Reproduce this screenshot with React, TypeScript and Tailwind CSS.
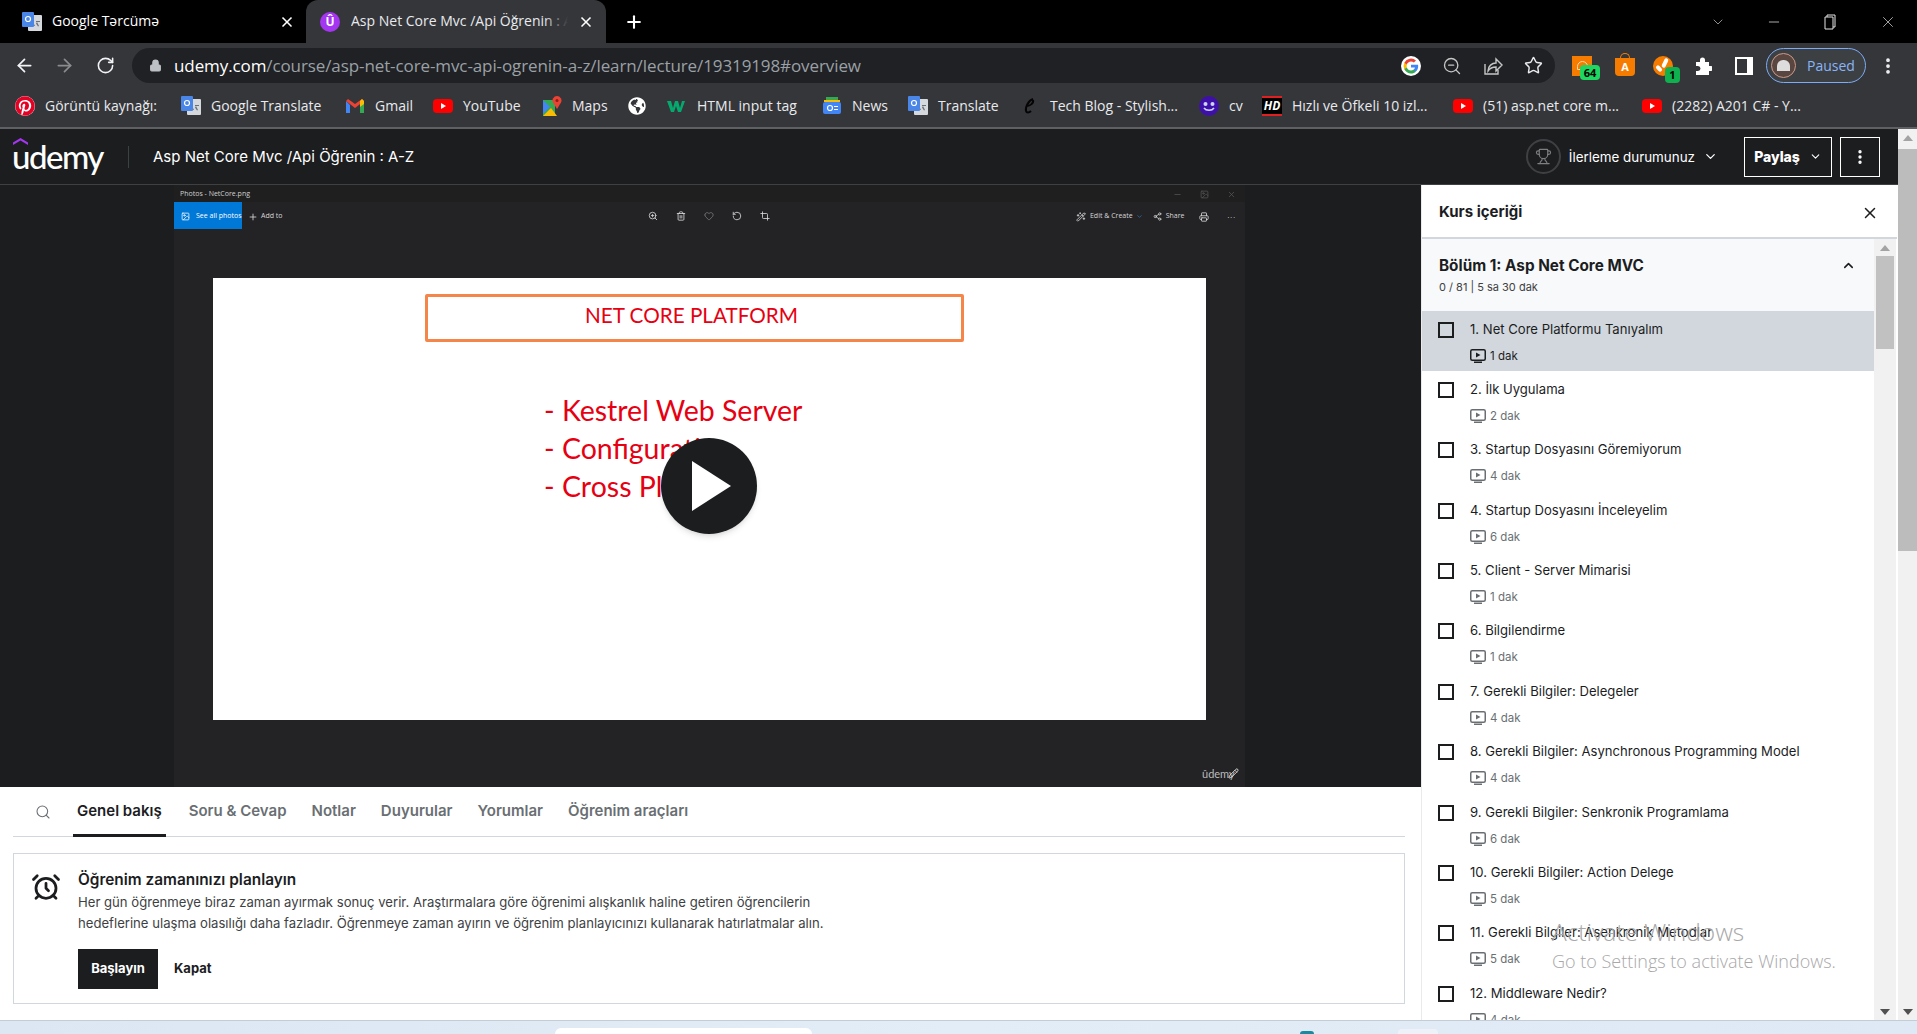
import React from 'react';
import { ArrowLeft, ArrowRight, RotateCw, Lock, ZoomOut, Star, Plus, X, Minus, ChevronDown, ChevronUp, Search, Trophy, AlarmClock, EllipsisVertical, ZoomIn, Trash2, Heart, RotateCcw, Crop, Printer, Image, Wand2, Share2, Pencil } from 'lucide-react';
import { FaPinterest, FaGlobeAmericas } from 'react-icons/fa';

const chrome = "font-['Open_Sans',sans-serif]";
const site = "font-['Inter',sans-serif]";

const TranslateIcon = () => (
  <svg width="20" height="20" viewBox="0 0 20 20" className="shrink-0">
    <rect x="6" y="3" width="14" height="16" rx="1" fill="#d5d8dc" />
    <path d="M11 10l2 4h-1l-1.500-3z M14 9h4v1h-4z M15 10l2 4-1 .5-2-3z" fill="#6b7078" />
    <rect x="0" y="0" width="12" height="15" rx="1" fill="#4a86e8" />
    <circle cx="6" cy="7" r="2.500" fill="none" stroke="#fff" strokeWidth="1.200" />
  </svg>
);

const GmailIcon = () => (
  <svg width="20" height="20" viewBox="0 0 20 20" className="shrink-0">
    <path d="M1 5v12h4V9z" fill="#4285f4" />
    <path d="M15 9v8h4V5z" fill="#34a853" />
    <path d="M1 5l9 7 9-7-2-2-7 5-7-5z" fill="#ea4335" />
    <path d="M15 5l2-2 2 2v3l-4 3z" fill="#fbbc04" />
  </svg>
);

const YoutubeIcon = () => (
  <svg width="20" height="20" viewBox="0 0 20 20" className="shrink-0">
    <rect x="0" y="3" width="20" height="14" rx="4" fill="#ff0000" />
    <path d="M8 7l5 3-5 3z" fill="#fff" />
  </svg>
);

const MapsIcon = () => (
  <svg width="20" height="20" viewBox="0 0 20 20" className="shrink-0">
    <path d="M1 4h12v16H1z" fill="#34a853" />
    <path d="M1 20l8-8 6 8z" fill="#fbbc04" />
    <path d="M1 4l7 7-7 7z" fill="#4285f4" />
    <path d="M15 0a4.500 4.500 0 0 1 4 6.500L15 13l-4-6.500A4.500 4.500 0 0 1 15 0z" fill="#ea4335" />
    <circle cx="15" cy="4.500" r="1.500" fill="#8c1d18" />
  </svg>
);

const GoogleG = ({ size = 20 }: { size?: number }) => (
  <svg width={size} height={size} viewBox="0 0 24 24">
    <circle cx="12" cy="12" r="12" fill="#fff" />
    <path d="M20.600 12.200c0-.6-.1-1.200-.2-1.800H12v3.400h4.800a4.100 4.100 0 0 1-1.800 2.700v2.200h2.900c1.700-1.500 2.700-3.800 2.700-6.500z" fill="#4285f4" />
    <path d="M12 21c2.400 0 4.400-.8 5.900-2.200L15 16.500c-.8.5-1.800.9-3 .9-2.300 0-4.300-1.600-5-3.700H4v2.300A9 9 0 0 0 12 21z" fill="#34a853" />
    <path d="M7 13.700a5.400 5.400 0 0 1 0-3.400V8H4a9 9 0 0 0 0 8z" fill="#fbbc04" />
    <path d="M12 6.600c1.300 0 2.500.5 3.400 1.300L18 5.400A9 9 0 0 0 4 8l3 2.300c.7-2.100 2.700-3.700 5-3.700z" fill="#ea4335" />
  </svg>
);

const bookmarks: { w: string; label?: string; icon: React.ReactNode }[] = [
  {
    w: 'w-[166px]', label: 'Görüntü kaynağı:',
    icon: (
      <div className="w-5 h-5 shrink-0 rounded-full bg-white">
        <FaPinterest size={20} color="#e60023" />
      </div>
    ),
  },
  { w: 'w-[164px]', label: 'Google Translate', icon: <TranslateIcon /> },
  { w: 'w-[88px]', label: 'Gmail', icon: <GmailIcon /> },
  { w: 'w-[109px]', label: 'YouTube', icon: <YoutubeIcon /> },
  { w: 'w-[86px]', label: 'Maps', icon: <MapsIcon /> },
  { w: 'w-[39px]', icon: <FaGlobeAmericas size={18} color="#fff" className="shrink-0" /> },
  {
    w: 'w-[155px]', label: 'HTML input tag',
    icon: (
      <svg width="20" height="20" viewBox="0 0 20 20" className="shrink-0">
        <path d="M0 5h4l2 7 2-7h3l2 7 2-7h3l-4 11h-3L9 10l-2 6H4z" fill="#04aa6d" />
      </svg>
    ),
  },
  {
    w: 'w-[86px]', label: 'News',
    icon: (
      <svg width="20" height="20" viewBox="0 0 20 20" className="shrink-0">
        <path d="M4 1h12v6H4z" fill="#34a853" />
        <path d="M2 4h16v2H2z" fill="#fbbc04" />
        <rect x="1" y="6" width="18" height="12" rx="2" fill="#4285f4" />
        <circle cx="8" cy="12" r="2.500" fill="none" stroke="#fff" strokeWidth="1.200" />
        <path d="M12 10h4v1h-4zM12 13h4v1h-4z" fill="#fff" />
      </svg>
    ),
  },
  { w: 'w-[112px]', label: 'Translate', icon: <TranslateIcon /> },
  {
    w: 'w-[179px]', label: 'Tech Blog - Stylish...',
    icon: (
      <svg width="20" height="20" viewBox="0 0 20 20" className="shrink-0">
        <path d="M13 3c-4 1-8 8-7 12 .5 2 3 2 5 0M7 10c3 0 7-3 6-6" fill="none" stroke="#050505" strokeWidth="2" />
      </svg>
    ),
  },
  {
    w: 'w-[63px]', label: 'cv',
    icon: (
      <svg width="20" height="20" viewBox="0 0 20 20" className="shrink-0">
        <circle cx="10" cy="10" r="10" fill="#3f10a8" />
        <circle cx="6.500" cy="8" r="2" fill="#cdd4ff" />
        <circle cx="13.500" cy="8" r="2" fill="#cdd4ff" />
        <path d="M5 12c2 3 8 3 10 0" fill="none" stroke="#cdd4ff" strokeWidth="1.500" />
      </svg>
    ),
  },
  {
    w: 'w-[191px]', label: 'Hızlı ve Öfkeli 10 izl...',
    icon: (
      <div className="w-5 h-5 shrink-0 bg-black border-y-2 border-y-[#e02020] text-white text-[12px] font-bold italic leading-4 text-center">HD</div>
    ),
  },
  { w: 'w-[189px]', label: '(51) asp.net core m...', icon: <YoutubeIcon /> },
  { w: 'w-[185px]', label: '(2282) A201 C# - Y...', icon: <YoutubeIcon /> },
];

const lectures = [
  ['1. Net Core Platformu Tanıyalım', '1 dak'],
  ['2. İlk Uygulama', '2 dak'],
  ['3. Startup Dosyasını Göremiyorum', '4 dak'],
  ['4. Startup Dosyasını İnceleyelim', '6 dak'],
  ['5. Client - Server Mimarisi', '1 dak'],
  ['6. Bilgilendirme', '1 dak'],
  ['7. Gerekli Bilgiler: Delegeler', '4 dak'],
  ['8. Gerekli Bilgiler: Asynchronous Programming Model', '4 dak'],
  ['9. Gerekli Bilgiler: Senkronik Programlama', '6 dak'],
  ['10. Gerekli Bilgiler: Action Delege', '5 dak'],
  ['11. Gerekli Bilgiler: Asenkronik Metodlar', '5 dak'],
  ['12. Middleware Nedir?', '4 dak'],
];

const VideoIcon = () => (
  <svg width="16" height="14" viewBox="0 0 16 14" className="shrink-0">
    <rect x="0.750" y="0.750" width="14.500" height="10.500" rx="1.500" fill="none" stroke="currentColor" strokeWidth="1.500" />
    <path d="M6 3.500l4.500 2.500L6 8.500z" fill="currentColor" />
    <path d="M4 12.500h8V14H4z" fill="currentColor" />
  </svg>
);

const ScrollArrow = ({ up }: { up?: boolean }) => (
  <div className="h-[17px] flex items-center justify-center">
    <svg width="10" height="6" viewBox="0 0 10 6">
      <path d={up ? 'M0 6l5-6 5 6z' : 'M0 0l5 6 5-6z'} fill={up ? '#a3a3a3' : '#505050'} />
    </svg>
  </div>
);

const tabs = ['Soru & Cevap', 'Notlar', 'Duyurular', 'Yorumlar', 'Öğrenim araçları'];

export default function App() {
  return (
    <div className={`relative w-[1917px] h-[1034px] overflow-hidden flex flex-col bg-white ${site}`}>
      {/* Browser tabs */}
      <div className={`h-[43px] shrink-0 bg-black flex text-white text-[14px] ${chrome}`}>
        <div className="w-[306px] flex items-center pl-[22px] pr-[11px]">
          <TranslateIcon />
          <span className="ml-[10px] flex-1 pb-[2px]">Google Tərcümə</span>
          <X size={16} strokeWidth={2.5} />
        </div>
        <div className="w-[300px] h-[43px] bg-[#35363a] rounded-t-xl flex items-center pl-[14px] pr-[12px]">
          <div className="w-5 h-5 shrink-0 rounded-full bg-[#a435f0] flex items-center justify-center text-[12px] font-bold leading-none">Û</div>
          <div className="relative ml-[11px] w-[217px] pb-[2px] overflow-hidden whitespace-nowrap text-[#e8eaed]">
            Asp Net Core Mvc /Api Öğrenin : A-Z
            <div className="absolute right-0 top-0 bottom-0 w-[24px] bg-gradient-to-r from-[#35363a]/0 to-[#35363a]" />
          </div>
          <X size={16} strokeWidth={2.5} className="ml-[10px]" />
        </div>
        <div className="ml-[18px] flex items-center"><Plus size={20} strokeWidth={2.5} /></div>
        <div className="ml-auto flex items-center text-[#d5d5d5]">
          <ChevronDown size={16} strokeWidth={1} />
          <Minus size={16} strokeWidth={1.2} className="ml-[40px]" />
          <svg width="14" height="16" viewBox="0 0 14 16" className="ml-[42px]">
            <path d="M3 3V1h8v12h-2M1 3h8v12H1z" fill="none" stroke="#e5e5e5" />
          </svg>
          <X size={18} strokeWidth={1} className="ml-[41px] mr-[20px]" />
        </div>
      </div>

      {/* Address bar */}
      <div className={`h-[42px] shrink-0 pt-[3px] bg-[#35363a] flex items-center ${chrome}`}>
        <ArrowLeft size={21} color="#f1f3f4" strokeWidth={2} className="ml-[14px]" />
        <ArrowRight size={21} color="#8a8b8d" strokeWidth={2} className="ml-[19px]" />
        <RotateCw size={19} color="#f1f3f4" strokeWidth={2} className="ml-[21px]" />
        <div className="ml-[17px] w-[1423px] h-[35px] rounded-full bg-[#202124] flex items-center pl-[17px] pr-[12px]">
          <Lock size={13} color="#bdc1c6" fill="#bdc1c6" />
          <span className="ml-[12px] text-[17px] tracking-[-0.1px] text-[#9aa0a6] whitespace-nowrap"><span className="text-white">udemy.com</span>/course/asp-net-core-mvc-api-ogrenin-a-z/learn/lecture/19319198#overview</span>
          <div className="ml-auto flex items-center gap-[21px]">
            <GoogleG />
            <ZoomOut size={20} color="#c4c7c5" strokeWidth={1.6} />
            <svg width="20" height="20" viewBox="0 0 20 20" fill="none" stroke="#c4c7c5" strokeWidth="1.400">
              <path d="M2 8v10h13v-4" />
              <path d="M5 15c0-5 4-8 8-8V3l6 6-6 6v-4c-4 0-6 1-8 4z" />
            </svg>
            <Star size={19} color="#e8eaed" strokeWidth={1.8} />
          </div>
        </div>
        <div className="relative ml-[17px] w-[20px] h-[20px] bg-[#f57c00] flex items-center justify-center">
          <div className="w-[11px] h-[9px] rounded-t-full border border-[#ffd9b0]" />
          <div className="absolute left-[8px] top-[9px] w-[20px] h-[15px] rounded-sm bg-[#1ed760] text-black text-[11px] font-bold leading-[15px] text-center">64</div>
        </div>
        <div className="ml-[23px] relative w-[20px] h-[18px] mt-[2px] bg-[#f57c00] rounded-b-sm text-white text-[11px] font-bold leading-[18px] text-center">
          A
          <div className="absolute left-[5px] -top-[5px] w-[10px] h-[6px] rounded-t-full border border-b-0 border-[#f57c00]" />
        </div>
        <div className="ml-[18px] relative w-[20px] h-[20px] rounded-full bg-[#f57c00]">
          <div className="absolute left-[10px] top-[2px] w-[4px] h-[10px] rotate-[25deg] bg-white rounded-sm" />
          <div className="absolute left-[4px] top-[9px] w-[4px] h-[7px] -rotate-[45deg] bg-white rounded-sm" />
          <div className="absolute left-[12px] top-[11px] w-[15px] h-[16px] rounded-sm bg-[#0fb14e] text-black text-[11px] font-bold leading-[16px] text-center">1</div>
        </div>
        <svg width="18" height="18" viewBox="0 0 18 18" className="ml-[21px]">
          <path d="M2 5h4V3a2.500 2.500 0 0 1 5 0v2h4v4h2a2.500 2.500 0 0 1 0 5h-2v4H2v-4h2a2.500 2.500 0 0 0 0-5H2z" fill="#fff" />
        </svg>
        <div className="ml-[23px] w-[18px] h-[18px] bg-white flex"><div className="w-[10px] h-[14px] m-[2px] bg-[#35363a]" /></div>
        <div className="ml-[13px] w-[100px] h-[35px] rounded-full border border-[#7cacf8] bg-[#3c4043] flex items-center pl-[4px]">
          <div className="w-[25px] h-[25px] rounded-full bg-[#5a4640] border border-[#c98] flex items-center justify-center">
            <div className="w-[13px] h-[11px] bg-[#ddd] rounded-t-md" />
          </div>
          <span className="ml-[11px] text-[14px] text-[#8ab4f8]">Paused</span>
        </div>
        <EllipsisVertical size={20} color="#f1f3f4" strokeWidth={2.5} className="ml-[12px]" />
      </div>

      {/* Bookmarks */}
      <div className={`h-[44px] shrink-0 pb-[1px] bg-[#35363a] border-b-2 border-b-[#5f6063] flex items-center pl-[15px] text-[14px] text-[#e8eaed] ${chrome}`}>
        {bookmarks.map((b, i) => (
          <div key={i} className={`${b.w} shrink-0 flex items-center gap-[10px] whitespace-nowrap`}>
            {b.icon}
            {b.label && <span>{b.label}</span>}
          </div>
        ))}
      </div>

      <div className="flex-1 flex min-h-0">
        <div className="w-[1898px] flex flex-col min-h-0">
          {/* Udemy header */}
          <div className="h-[56px] shrink-0 bg-[#1c1d1f] border-b border-b-[#3e4143] flex items-center text-white">
            <div className="relative w-[128px] pl-[12px]">
              <svg width="15" height="7" viewBox="0 0 15 7" className="absolute left-[13px] top-0">
                <path d="M7.500 0L15 4.500V7L7.500 2.500 0 7V4.500z" fill="#a435f0" />
              </svg>
              <span className="text-[33px] leading-[36px] font-medium tracking-[-1.5px] font-['Lato',sans-serif]">udemy</span>
            </div>
            <div className="w-px h-[22px] bg-[#3e4143]" />
            <span className="ml-[24px] pt-[1px] text-[15px]">Asp Net Core Mvc /Api Öğrenin : A-Z</span>
            <div className="ml-auto w-[35px] h-[35px] rounded-full border-2 border-[#3e4143] flex items-center justify-center">
              <Trophy size={17} color="#7d7f82" strokeWidth={1.6} />
            </div>
            <span className="ml-[8px] pt-[1px] text-[13.400px]">İlerleme durumunuz</span>
            <ChevronDown size={15} className="ml-[8px]" />
            <div className="ml-[26px] w-[88px] h-[40px] border border-white flex items-center justify-center gap-[9px] text-[14px] font-extrabold">
              Paylaş <ChevronDown size={13} />
            </div>
            <div className="ml-[8px] mr-[18px] w-[40px] h-[40px] border border-white flex items-center justify-center">
              <EllipsisVertical size={18} strokeWidth={2.5} />
            </div>
          </div>

          <div className="flex-1 flex min-h-0">
            <div className="w-[1421px] shrink-0 flex flex-col">
              {/* Video */}
              <div className="relative h-[602px] shrink-0 bg-[#1c1d1f] flex pl-[174px]">
                <div className="w-[1071px] bg-[#232225] flex flex-col">
                  <div className={`h-[17px] shrink-0 pt-[1px] bg-[#1f1f20] flex items-center pl-[6px] text-[7px] text-[#d0d0d0] ${chrome}`}>
                    Photos - NetCore.png
                    <div className="ml-auto flex items-center gap-[18px] pr-[9px] text-[#555]">
                      <Minus size={9} />
                      <Image size={9} />
                      <X size={9} />
                    </div>
                  </div>
                  <div className={`h-[27px] shrink-0 flex items-center text-[7px] text-[#d8d8d8] ${chrome}`}>
                    <div className="w-[68px] h-full pt-[2px] bg-[#0078d7] flex items-center pl-[7px] gap-[6px] text-white">
                      <Image size={9} /> See all photos
                    </div>
                    <Plus size={10} className="ml-[6px] mt-[2px]" />
                    <span className="ml-[3px] pt-[2px]">Add to</span>
                    <div className="ml-[365px] pt-[1px] flex items-center gap-[18px]">
                      <ZoomIn size={10} />
                      <Trash2 size={10} />
                      <Heart size={10} color="#777" />
                      <RotateCcw size={10} />
                      <Crop size={10} />
                    </div>
                    <div className="ml-auto pt-[2px] flex items-center pr-[9px]">
                      <Wand2 size={10} />
                      <span className="ml-[4px]">Edit &amp; Create</span>
                      <ChevronDown size={7} color="#2b88d8" className="ml-[3px]" />
                      <Share2 size={9} className="ml-[10px]" />
                      <span className="ml-[4px]">Share</span>
                      <Printer size={10} className="ml-[15px]" />
                      <span className="ml-[18px] tracking-[1px]">...</span>
                    </div>
                  </div>
                  <div className="mt-[49px] ml-[39px] w-[993px] h-[442px] bg-white font-['Lato',sans-serif] text-[#e60012] overflow-hidden">
                    <div className="mt-[16px] ml-[212px] w-[539px] h-[48px] border-[3px] border-[#f58549] rounded-[2px] flex items-center justify-center pr-[6px] pb-[4px] text-[20.700px]">
                      NET CORE PLATFORM
                    </div>
                    <div className="mt-[49px] ml-[331px] text-[28.500px] leading-[38px]">
                      <p>- Kestrel Web Server</p>
                      <p>- Configuration</p>
                      <p>- Cross Platform</p>
                    </div>
                  </div>
                </div>
                <div className="absolute left-[661px] top-[253px] w-[96px] h-[96px] rounded-full bg-[#1c1d1f] shadow-md flex items-center justify-center">
                  <svg width="40" height="50" viewBox="0 0 40 50" className="ml-[6px]"><path d="M0 0l39 25L0 50z" fill="#fff" /></svg>
                </div>
                <span className="absolute left-[1202px] top-[581px] text-[11px] text-[#bbb] font-['Lato',sans-serif]">ûdemy</span>
                <Pencil size={11} color="#ddd" className="absolute left-[1228px] top-[583px]" />
              </div>

              {/* Lower tabs */}
              <div className="ml-[13px] mr-[16px] h-[50px] shrink-0 border-b border-b-[#d1d7dc] flex items-stretch text-[15px] font-semibold text-[#6a6f73] gap-[25px]">
                <div className="ml-[22px] w-[16px] flex items-center"><Search size={16} strokeWidth={1.6} /></div>
                <div className="-ml-[3px] -mr-[2px] -mb-px px-[4px] pt-[1px] border-b-[3px] border-b-[#1c1d1f] text-[#1c1d1f] flex items-center">Genel bakış</div>
                {tabs.map((t) => (
                  <div key={t} className="flex items-center">{t}</div>
                ))}
              </div>

              {/* Learning reminder */}
              <div className="mt-[16px] ml-[13px] mr-[16px] h-[151px] shrink-0 border border-[#d1d7dc] flex pl-[17px] pt-[18px]">
                <AlarmClock size={30} color="#1c1d1f" strokeWidth={2.2} className="shrink-0" />
                <div className="ml-[17px] text-[#1c1d1f]">
                  <h3 className="text-[15.400px] font-semibold leading-[16px]">Öğrenim zamanınızı planlayın</h3>
                  <p className="mt-[4px] text-[13.130px] leading-[21px] text-[#3e4143] whitespace-nowrap">
                    Her gün öğrenmeye biraz zaman ayırmak sonuç verir. Araştırmalara göre öğrenimi alışkanlık haline getiren öğrencilerin<br />
                    hedeflerine ulaşma olasılığı daha fazladır. Öğrenmeye zaman ayırın ve öğrenim planlayıcınızı kullanarak hatırlatmalar alın.
                  </p>
                  <div className="mt-[15px] flex items-center text-[13px] font-bold">
                    <div className="w-[80px] h-[40px] bg-[#1c1d1f] text-white flex items-center justify-center">Başlayın</div>
                    <span className="ml-[16px]">Kapat</span>
                  </div>
                </div>
              </div>
            </div>

            {/* Course content sidebar */}
            <div className="w-[477px] shrink-0 border-l border-l-[#e8eaed] flex flex-col min-h-0 pr-[1px]">
              <div className="h-[54px] shrink-0 pt-[3px] border-b-2 border-b-[#d1d7dc] flex items-center pl-[17px] pr-[18px] text-[15px] font-bold text-[#1c1d1f]">
                Kurs içeriği
                <X size={18} strokeWidth={2} className="ml-auto" />
              </div>
              <div className="flex-1 flex min-h-0">
                <div className="w-[452px] overflow-hidden">
                  <div className="h-[72px] bg-[#f7f9fa] pl-[17px] pr-[22px] pt-[17px] relative text-[#1c1d1f]">
                    <h2 className="text-[15.300px] font-bold leading-[20px]">Bölüm 1: Asp Net Core MVC</h2>
                    <p className="mt-[4px] text-[11px] leading-[14px] text-[#3e4143]">0 / 81 | 5 sa 30 dak</p>
                    <ChevronUp size={15} strokeWidth={2.5} className="absolute right-[18px] top-[19px]" />
                  </div>
                  {lectures.map(([title, length], i) => (
                    <div key={title} className={i === 0 ? 'h-[60.400px] flex bg-[#d1d7dc]' : 'h-[60.400px] flex'}>
                      <div className="mt-[10.500px] ml-[16px] w-4 h-4 shrink-0 border-2 border-[#1c1d1f]" />
                      <div className="ml-[16px] pt-[8.500px]">
                        <p className="text-[13.100px] leading-[18px] text-[#1c1d1f] whitespace-nowrap">{title}</p>
                        <p className={i === 0 ? 'mt-[10px] flex items-center gap-[4px] text-[11.500px] leading-[16px] text-[#1c1d1f]' : 'mt-[10px] flex items-center gap-[4px] text-[11.500px] leading-[16px] text-[#6a6f73]'}>
                          <VideoIcon /> {length}
                        </p>
                      </div>
                    </div>
                  ))}
                </div>
                <div className="w-[22px] shrink-0 bg-[#f1f1f1] flex flex-col px-[2px]">
                  <ScrollArrow up />
                  <div className="h-[93px] bg-[#c1c1c1]" />
                  <div className="flex-1" />
                  <ScrollArrow />
                </div>
              </div>
            </div>
          </div>
        </div>
        {/* Page scrollbar */}
        <div className="w-[19px] shrink-0 bg-[#f1f1f1] flex flex-col">
          <ScrollArrow up />
          <div className="h-[402px] mt-[3px] bg-[#bcbcbc]" />
          <div className="flex-1" />
          <ScrollArrow />
        </div>
      </div>

      {/* Desktop taskbar peeking through */}
      <div className="h-[14px] shrink-0 border-t border-t-[#c5ccd6] bg-gradient-to-r from-[#dde6f3] via-[#e2edf7] to-[#dfe9f6] flex items-end">
        <div className="ml-[555px] w-[257px] h-[6px] rounded-t-lg bg-white" />
        <div className="ml-[488px] w-[14px] h-[3px] rounded-t-full bg-[#1c8a9e]" />
        <div className="ml-[84px] w-[40px] h-[5px] rounded-t bg-[#eef2f8]" />
      </div>

      {/* Windows activation watermark */}
      <div className="absolute left-[1552px] top-[916px] text-[#a8a8a8] font-['Open_Sans',sans-serif] pointer-events-none">
        <p className="text-[24.500px] leading-[32px] font-light">Activate Windows</p>
        <p className="text-[18px] leading-[26px] font-light">Go to Settings to activate Windows.</p>
      </div>
    </div>
  );
}
